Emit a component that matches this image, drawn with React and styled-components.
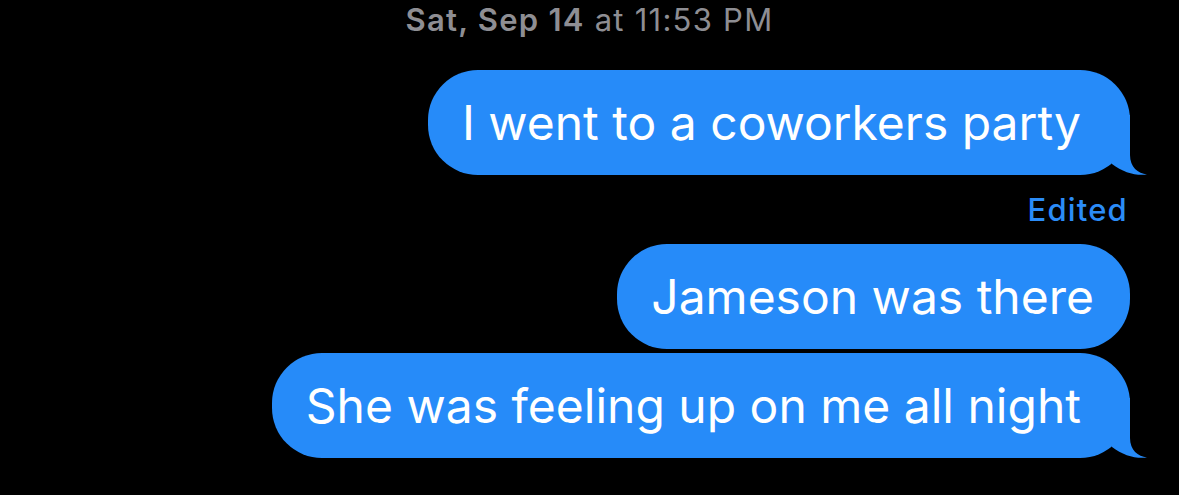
import React from "react";
import styled, { createGlobalStyle } from "styled-components";

const Global = createGlobalStyle`
  html, body { margin: 0; padding: 0; background: #000; }
  body { font-family: Inter, "Noto Sans", sans-serif; -webkit-font-smoothing: antialiased; }
`;

const Screen = styled.div`
  width: 1179px;
  height: 495px;
  background: #000;
  display: flex;
  flex-direction: column;
  align-items: flex-end;
  padding: 0 49px 0 0;
  box-sizing: border-box;
  overflow: hidden;
`;

const Stamp = styled.div`
  align-self: center;
  margin-left: 49px;
  margin-top: 2px;
  font-size: 31px;
  line-height: 36px;
  color: #8e8e93;
  letter-spacing: 1.25px;
  b { font-weight: 600; }
`;

const Bubble = styled.div`
  position: relative;
  background: #268bf9;
  color: #fff;
  font-size: 48px;
  line-height: 63px;
  padding: 21px ${(p) => (p.$tail ? 49 : 36)}px 21px 34px;
  border-radius: 50px;
  margin-top: ${(p) => p.$gap}px;
  white-space: nowrap;
`;

const Tail = styled.svg`
  position: absolute;
  right: -17px;
  bottom: 0;
  width: 44px;
  height: 60px;
  display: block;
`;

const Edited = styled.div`
  margin-top: 17px;
  margin-right: 2px;
  font-size: 31px;
  line-height: 36px;
  font-weight: 500;
  letter-spacing: 1.2px;
  color: #2b8cf7;
`;

function Message({ text, tail, gap }) {
  return (
    <Bubble $gap={gap} $tail={tail}>
      {text}
      {tail && (
        <Tail viewBox="0 0 44 60">
          <path
            d="M27 0 L27 40 C27 52 35 58.5 44 59.5 C33 61 20 57.5 9 49 L9 0 Z"
            fill="#268bf9"
          />
        </Tail>
      )}
    </Bubble>
  );
}

export default function App() {
  return (
    <>
      <Global />
      <Screen>
        <Stamp>
          <b>Sat, Sep 14</b> at 11:53 PM
        </Stamp>
        <Message gap={32} tail text="I went to a coworkers party" />
        <Edited>Edited</Edited>
        <Message gap={16} text="Jameson was there" />
        <Message gap={4} tail text="She was feeling up on me all night" />
      </Screen>
    </>
  );
}
